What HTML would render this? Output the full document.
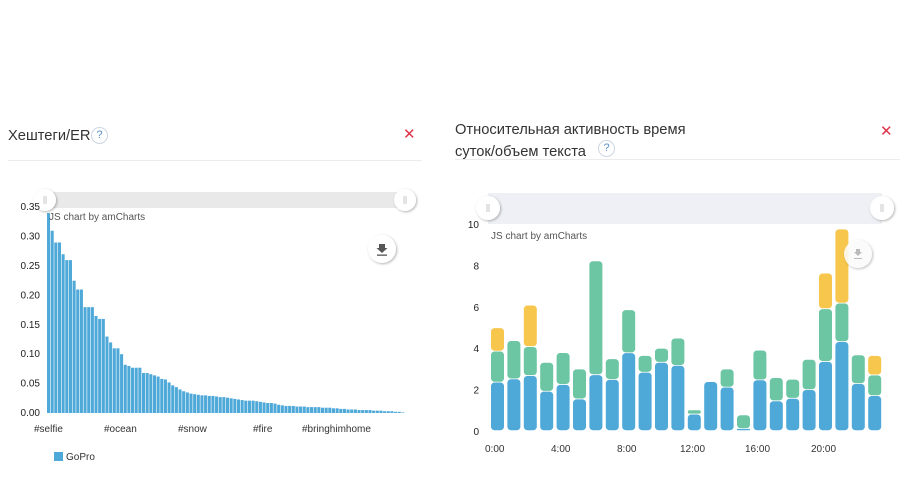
<!DOCTYPE html>
<html><head><meta charset="utf-8"><style>
body{margin:0;width:910px;height:486px;background:#fff;font-family:"Liberation Sans","DejaVu Sans",sans-serif;overflow:hidden;position:relative}
.t{position:absolute;color:#333;font-size:14.7px;line-height:22px}
.q{position:absolute;width:15px;height:15px;border:1px solid #cdd6e2;border-radius:50%;color:#5a8fc7;font-size:11px;text-align:center;line-height:15px;background:#fff}
.x{position:absolute;color:#e0344a;font-size:15px;font-weight:bold}
.hr{position:absolute;height:1px;background:#ececec}
svg{position:absolute;left:0;top:0}
</style></head><body>
<div class="t" style="left:8px;top:125px">Хештеги/ER</div>
<div class="q" style="left:91px;top:127px">?</div>
<div class="x" style="left:403px;top:125px">✕</div>
<div class="hr" style="left:8px;top:160px;width:414px"></div>

<div class="t" style="left:455px;top:119px">Относительная активность время<br>суток/объем текста</div>
<div class="q" style="left:598px;top:140px">?</div>
<div class="x" style="left:880px;top:122px">✕</div>
<div class="hr" style="left:455px;top:159px;width:445px"></div>

<svg width="910" height="486" id="s" font-family="Liberation Sans, DejaVu Sans, sans-serif">
<defs><filter id="sh" x="-50%" y="-50%" width="200%" height="200%"><feDropShadow dx="1" dy="1" stdDeviation="1.2" flood-color="#000" flood-opacity="0.3"/></filter></defs>
<rect x="45" y="192" width="360" height="16" fill="#e9e9e9"/>
<rect x="488" y="193" width="394" height="31" fill="#eef0f5"/>
<g id="L"></g><g id="R"></g>
<circle cx="45" cy="200" r="11" fill="#fff" filter="url(#sh)"/>
<circle cx="405" cy="200" r="11" fill="#fff" filter="url(#sh)"/>
<circle cx="488" cy="208" r="12" fill="#fff" filter="url(#sh)"/>
<circle cx="882" cy="208" r="12" fill="#fff" filter="url(#sh)"/>
<g stroke="#bbb" stroke-width="0.8"><line x1="44" y1="196" x2="44" y2="204"/><line x1="46" y1="196" x2="46" y2="204"/><line x1="404" y1="196" x2="404" y2="204"/><line x1="406" y1="196" x2="406" y2="204"/><line x1="487" y1="204" x2="487" y2="212"/><line x1="489" y1="204" x2="489" y2="212"/><line x1="881" y1="204" x2="881" y2="212"/><line x1="883" y1="204" x2="883" y2="212"/></g>
<circle cx="382" cy="249" r="14" fill="#fff" filter="url(#sh)"/>
<path d="M379 244h6v4h2.5l-5.5 5-5.5-5h2.5z" fill="#555"/><rect x="377" y="254.5" width="10" height="1.3" fill="#555"/>
<circle cx="858" cy="254" r="14" fill="#fff" fill-opacity="0.85" filter="url(#sh)"/>
<path d="M856 249h4v3h2l-4 4-4-4h2z" fill="#bbb"/><rect x="854" y="258" width="8" height="1" fill="#bbb"/>
<g font-size="10" fill="#555"><text x="49" y="220">JS chart by amCharts</text><text x="491" y="239">JS chart by amCharts</text></g>
<g font-size="10" fill="#222" text-anchor="end" id="yl"></g>
<g font-size="10" fill="#333"><text x="34" y="432">#selfie</text><text x="104" y="432">#ocean</text><text x="178" y="432">#snow</text><text x="253" y="432">#fire</text><text x="302" y="432">#bringhimhome</text>
<text x="485" y="452">0:00</text><text x="551" y="452">4:00</text><text x="617" y="452">8:00</text><text x="680" y="452">12:00</text><text x="745" y="452">16:00</text><text x="811" y="452">20:00</text></g>
<rect x="54" y="452" width="9" height="9" fill="#4ea8d8"/><text x="66" y="460" font-size="10" fill="#333">GoPro</text>
</svg>
<script>
var NS="http://www.w3.org/2000/svg";
function el(p,t,a,txt){var e=document.createElementNS(NS,t);for(var k in a)e.setAttribute(k,a[k]);if(txt!=null)e.textContent=txt;p.appendChild(e);return e;}
var yl=document.getElementById('yl');
for(var i=0;i<=7;i++){el(yl,'text',{x:40,y:416-i*29.4},(i*0.05).toFixed(2));}
for(var i=0;i<=5;i++){el(yl,'text',{x:479,y:435-i*41.4},String(i*2));}
var v=[0.34,0.31,0.29,0.29,0.27,0.26,0.26,0.225,0.21,0.21,0.18,0.18,0.18,0.165,0.16,0.16,0.13,0.12,0.11,0.11,0.1,0.082,0.08,0.077,0.077,0.077,0.068,0.068,0.066,0.064,0.062,0.058,0.057,0.052,0.047,0.044,0.04,0.037,0.035,0.033,0.032,0.031,0.03,0.03,0.029,0.029,0.028,0.027,0.027,0.026,0.025,0.024,0.023,0.022,0.021,0.021,0.021,0.02,0.019,0.018,0.017,0.017,0.016,0.014,0.013,0.012,0.012,0.012,0.011,0.011,0.011,0.01,0.01,0.01,0.01,0.009,0.009,0.009,0.008,0.008,0.007,0.007,0.006,0.006,0.006,0.005,0.005,0.005,0.005,0.004,0.004,0.004,0.003,0.003,0.003,0.002,0.002,0.001];
var L=document.getElementById('L'),pw=358/v.length;
v.forEach(function(d,i){var h=d/0.05*29.4;el(L,'rect',{x:47+i*pw,y:413-h,width:pw-0.6,height:h,fill:'#4ea8d8'});});
var r=[[2.34,3.84,4.97],[2.5,4.35],[2.66,4.06,6.06],[1.9,3.3],[2.23,3.77],[1.53,2.98],[2.7,8.2],[2.47,3.47],[3.76,5.84],[2.82,3.63],[3.3,3.98],[3.15,4.47],[0.8,1.0],[2.37],[2.1,2.98],[0.1,0.76],[2.45,3.89],[1.44,2.56],[1.56,2.48],[1.98,3.44],[3.34,5.89,7.61],[4.3,6.16,9.74],[2.27,3.66],[1.69,2.69,3.63]];
var R=document.getElementById('R'),c=['#4ea8d8','#6cc6a4','#f7c64d'];
r.forEach(function(a,i){var x=491+i*16.4,p=0;a.forEach(function(t,j){var y0=431-p*20.7,y1=431-t*20.7;var h=Math.max(y0-y1-0.8,1);el(R,'rect',{x:x,y:y1,width:13,height:h,rx:Math.min(3.5,h/2),fill:c[j]});p=t;});});
</script>
</body></html>
